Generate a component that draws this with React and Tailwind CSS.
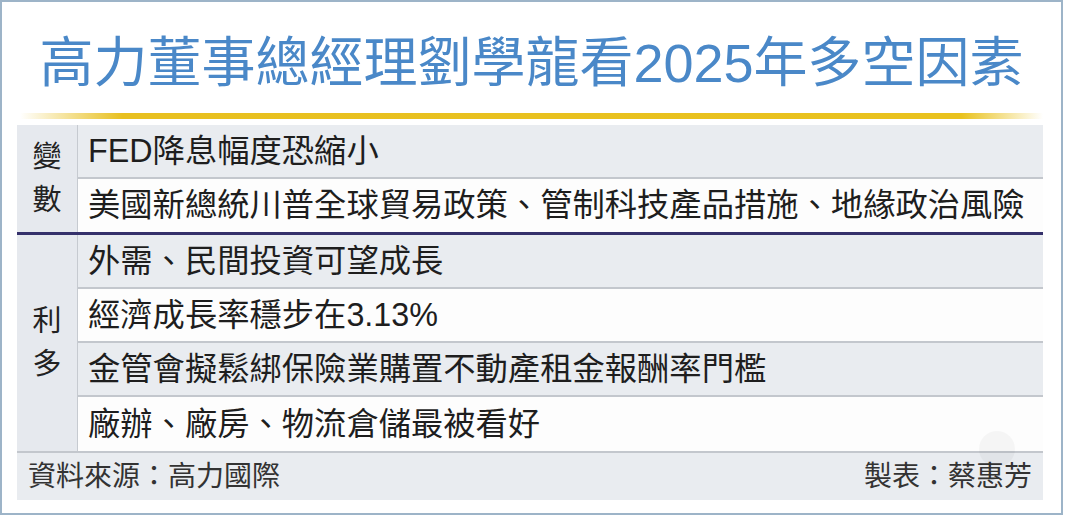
const groups = [
  {
    label: ["變", "數"],
    rows: [
      "FED降息幅度恐縮小",
      "美國新總統川普全球貿易政策、管制科技產品措施、地緣政治風險",
    ],
  },
  {
    label: ["利", "多"],
    rows: [
      "外需、民間投資可望成長",
      "經濟成長率穩步在3.13%",
      "金管會擬鬆綁保險業購置不動產租金報酬率門檻",
      "廠辦、廠房、物流倉儲最被看好",
    ],
  },
];

const App = () => {
  return (
    <div className="relative w-[1063px] h-[515px] border-2 border-[#9db4c8] bg-white font-['Liberation_Sans','Noto_Sans_CJK_TC',sans-serif]">
      {/* Title */}
      <h1 className="mt-[31px] h-[60px] text-center text-[54px] leading-[60px] text-[#4a88c8] whitespace-nowrap">
        高力董事總經理劉學龍看2025年多空因素
      </h1>

      {/* Gold rule */}
      <div className="mt-[20px] mx-[18px] h-[6px] bg-[linear-gradient(90deg,rgba(232,192,32,0)_0%,#e8c020_10%,#e9c21e_92%,rgba(232,192,32,0)_100%)]" />

      {/* Table */}
      <div className="mt-[6px] ml-[15px] w-[1026px]">
        {groups.map((group, gi) => (
          <div
            key={gi}
            className={`flex ${
              gi === 0
                ? "border-b-[3px] border-[#35316b]"
                : "border-b-2 border-[#c3c7cd]"
            }`}
          >
            <div className="w-[61px] shrink-0 flex flex-col items-center justify-center bg-[#e6e9ee] border-r border-[#c6cad0] text-[29px] leading-[43px] text-[#222]">
              {group.label.map((ch) => (
                <span key={ch}>{ch}</span>
              ))}
            </div>
            <div className="flex-1 flex flex-col">
              {group.rows.map((row, ri) => {
                const gray = ri % 2 === 0;
                const last = ri === group.rows.length - 1;
                return (
                  <div
                    key={row}
                    className={`flex items-center pl-[10px] text-[32.3px] text-[#1e1e1e] whitespace-nowrap ${
                      gray ? "bg-[#e9ecf0]" : "bg-[#fdfdfd]"
                    } ${
                      last
                        ? gi === 0
                          ? "h-[53px]"
                          : "h-[54px]"
                        : "h-[54px] border-b-2 border-[#c3c7cd]"
                    }`}
                  >
                    {row}
                  </div>
                );
              })}
            </div>
          </div>
        ))}

        {/* Footer */}
        <div className="h-[47px] flex items-center justify-between px-[11px] bg-[#e9ecf0] text-[28px] text-[#333]">
          <span>資料來源：高力國際</span>
          <span>製表：蔡惠芳</span>
        </div>
      </div>

      {/* faint watermark */}
      <div className="absolute left-[977px] top-[429px] w-[36px] h-[36px] rounded-full bg-[#000]/[0.03]" />
    </div>
  );
};

export default App;
